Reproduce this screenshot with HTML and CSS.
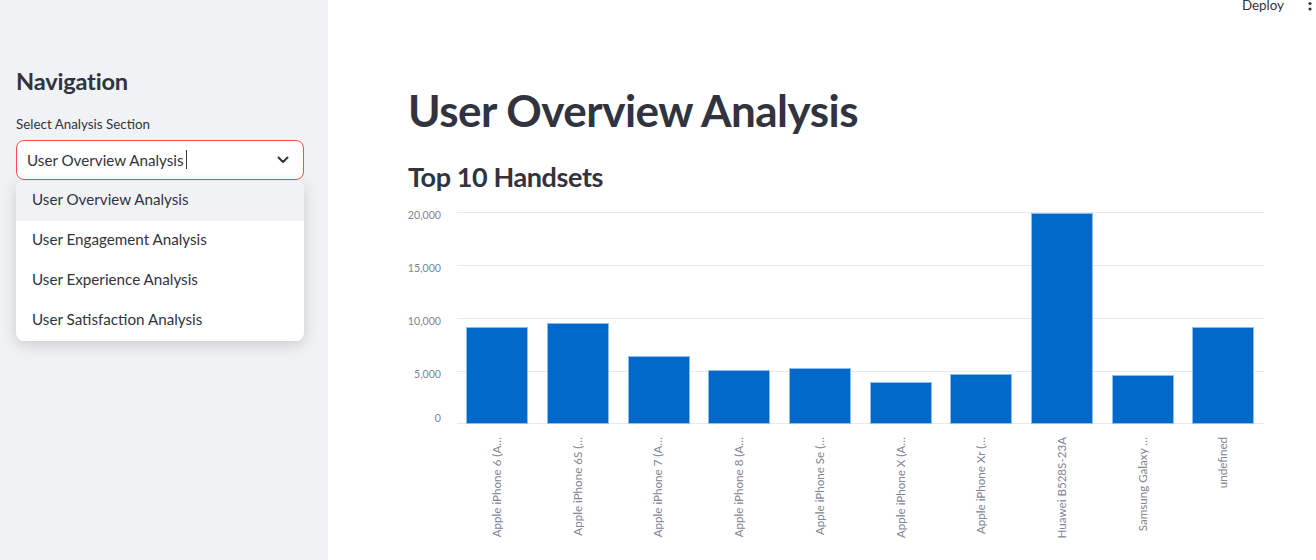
FILE: index.html
```html
<!DOCTYPE html>
<html>
<head>
<meta charset="utf-8">
<link rel="stylesheet" href="styles.css">
</head>
<body>
<div class="app">
  <aside class="sidebar">
    <h2 class="nav-title">Navigation</h2>
    <label class="field-label">Select Analysis Section</label>
    <div class="select-wrap">
      <div class="select">
        <span class="select-value">User Overview Analysis</span><span class="caret"></span>
        <svg class="chevron" width="12" height="8" viewBox="0 0 12 8"><path d="M1.5 1.5 L6 6 L10.5 1.5" fill="none" stroke="#31333f" stroke-width="2" stroke-linecap="round" stroke-linejoin="round"/></svg>
      </div>
      <ul class="menu">
        <li class="menu-item active">User Overview Analysis</li>
        <li class="menu-item">User Engagement Analysis</li>
        <li class="menu-item">User Experience Analysis</li>
        <li class="menu-item">User Satisfaction Analysis</li>
      </ul>
    </div>
  </aside>
  <main class="main">
    <header class="topbar">
      <span class="deploy">Deploy</span>
      <svg class="kebab" width="6" height="20" viewBox="0 0 6 20"><circle cx="3" cy="-3" r="1.6" fill="#31333f"/><circle cx="3" cy="2.5" r="1.6" fill="#31333f"/><circle cx="3" cy="8" r="1.6" fill="#31333f"/></svg>
    </header>
    <h1 class="title">User Overview Analysis</h1>
    <h3 class="subtitle">Top 10 Handsets</h3>
    <svg class="chart" width="870" height="350" viewBox="400 200 870 350">
      <g class="grid" stroke="#e6e9ef" stroke-width="1">
        <line x1="457" x2="1264" y1="212.5" y2="212.5"/>
        <line x1="457" x2="1264" y1="265.5" y2="265.5"/>
        <line x1="457" x2="1264" y1="318.5" y2="318.5"/>
        <line x1="457" x2="1264" y1="371.5" y2="371.5"/>
        <line x1="457" x2="1264" y1="423.5" y2="423.5"/>
      </g>
      <g class="ylab" font-size="10.6" fill="#808495" text-anchor="end">
        <text x="441" y="219">20,000</text>
        <text x="441" y="272">15,000</text>
        <text x="441" y="325">10,000</text>
        <text x="441" y="378">5,000</text>
        <text x="441" y="422">0</text>
      </g>
      <g class="bars" fill="#0068c9" stroke="#8dbdea" stroke-width="1">
        <rect x="466.5" y="327.5" width="61" height="96"/>
        <rect x="547.5" y="323.5" width="61" height="100"/>
        <rect x="628.5" y="356.5" width="61" height="67"/>
        <rect x="708.5" y="370.5" width="61" height="53"/>
        <rect x="789.5" y="368.5" width="61" height="55"/>
        <rect x="870.5" y="382.5" width="61" height="41"/>
        <rect x="950.5" y="374.5" width="61" height="49"/>
        <rect x="1031.5" y="213.5" width="61" height="210"/>
        <rect x="1112.5" y="375.5" width="61" height="48"/>
        <rect x="1192.5" y="327.5" width="61" height="96"/>
      </g>
      <g class="xlab" font-size="11.6" fill="#808495" text-anchor="end">
        <text transform="translate(501 437) rotate(-90)">Apple iPhone 6 (A…</text>
        <text transform="translate(582 437) rotate(-90)">Apple iPhone 6S (…</text>
        <text transform="translate(662 437) rotate(-90)">Apple iPhone 7 (A…</text>
        <text transform="translate(743 437) rotate(-90)">Apple iPhone 8 (A…</text>
        <text transform="translate(824 437) rotate(-90)">Apple iPhone Se (…</text>
        <text transform="translate(905 437) rotate(-90)">Apple iPhone X (A…</text>
        <text transform="translate(985 437) rotate(-90)">Apple iPhone Xr (…</text>
        <text transform="translate(1066 437) rotate(-90)">Huawei B528S-23A</text>
        <text transform="translate(1147 437) rotate(-90)">Samsung Galaxy …</text>
        <text transform="translate(1227 437) rotate(-90)">undefined</text>
      </g>
    </svg>
  </main>
</div>
</body>
</html>
```

FILE: styles.css
```css
* { box-sizing: border-box; }
html, body {
  margin: 0;
  padding: 0;
  height: 100%;
  overflow: hidden;
  background: #ffffff;
  color: #31333f;
  font-family: "Lato", "Noto Sans", sans-serif;
}
.app {
  display: flex;
  height: 560px;
}
.sidebar {
  width: 328px;
  flex: none;
  background: #f0f2f6;
  padding: 65px 24px 0 16px;
}
.nav-title {
  margin: 0 0 17px 0;
  font-size: 23.6px;
  line-height: 32px;
  font-weight: 700;
  letter-spacing: -0.2px;
}
.field-label {
  display: block;
  font-size: 13.4px;
  line-height: 20px;
  margin-bottom: 6px;
}
.select-wrap {
  position: relative;
  width: 288px;
}
.select {
  display: flex;
  align-items: center;
  height: 40px;
  padding: 0 12px 1px 10px;
  background: #ffffff;
  border: 1px solid #ff4b4b;
  border-radius: 8px;
  font-size: 15.2px;
}
.select-value { white-space: nowrap; }
.caret {
  display: inline-block;
  width: 1px;
  height: 19px;
  background: #31333f;
  margin-left: 2px;
}
.chevron { margin-left: auto; margin-right: 2px; margin-top: 1px; }
.menu {
  position: absolute;
  left: 0;
  top: 41px;
  width: 288px;
  margin: 0;
  padding: 0;
  list-style: none;
  background: #ffffff;
  border-radius: 8px;
  overflow: hidden;
  box-shadow: 0 4px 16px rgba(0, 0, 0, 0.16);
}
.menu-item {
  height: 40px;
  line-height: 36px;
  padding-left: 16px;
  font-size: 15.2px;
}
.menu-item.active { background: #f0f2f6; }
.main {
  position: relative;
  flex: 1;
  padding: 84px 0 0 80px;
}
.topbar {
  position: absolute;
  top: -11px;
  right: 0;
  display: flex;
  align-items: center;
  gap: 23px;
  padding-right: 3px;
  height: 32px;
}
.deploy { font-size: 13.4px; }
.kebab { margin-top: 11px; }
.title {
  margin: 0;
  font-size: 44px;
  line-height: 52px;
  font-weight: 700;
  letter-spacing: -0.5px;
}
.subtitle {
  margin: 23px 0 0 0;
  font-size: 27px;
  line-height: 36px;
  font-weight: 700;
  letter-spacing: -0.4px;
}
.chart {
  display: block;
  margin: 5px 0 0 -8px;
  font-family: "Lato", "Noto Sans", sans-serif;
}
```
